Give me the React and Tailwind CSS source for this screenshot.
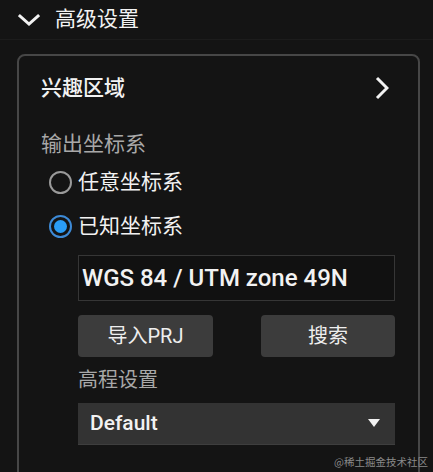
import React from "react";

const font = { fontFamily: "Roboto, 'Noto Sans CJK SC', sans-serif" };

export default function App() {
  return (
    <div className="relative w-[433px] h-[472px] overflow-hidden bg-[#141414] text-[#f2f2f2]" style={font}>
      {/* header */}
      <div className="flex items-center h-[40px] pl-[18px] border-b border-[#1c1c1c]">
        <svg width="22" height="14" viewBox="0 0 22 14" className="mt-[1px]">
          <path d="M2 3 L11 11 L20 3" fill="none" stroke="#f2f2f2" strokeWidth="3" strokeLinecap="square" />
        </svg>
        <span className="ml-[15px] text-[21px] leading-none">高级设置</span>
      </div>

      {/* card */}
      <div className="ml-[17px] mt-[14px] w-[403px] h-[440px] border-2 border-[#474747] rounded-[8px] pt-[12px] pl-[22px] pr-[23px]">
        <div className="flex items-center justify-between h-[40px]">
          <span className="text-[21px] leading-none font-medium">兴趣区域</span>
          <svg width="14" height="24" viewBox="0 0 14 24" className="mr-[6px]">
            <path d="M2 2 L12 12 L2 22" fill="none" stroke="#f2f2f2" strokeWidth="3" />
          </svg>
        </div>

        <div className="mt-[20px] h-[32px] flex items-center text-[21px] leading-none text-[#a8a8a8]">输出坐标系</div>

        <div className="flex items-center h-[44px] pl-[8px]">
          <span className="w-[23px] h-[23px] rounded-full border-2 border-[#9a9a9a]" />
          <span className="ml-[6px] text-[21px] leading-none">任意坐标系</span>
        </div>
        <div className="flex items-center h-[44px] pl-[8px]">
          <span className="w-[23px] h-[23px] rounded-full border-2 border-[#3d8ad6] flex items-center justify-center">
            <span className="w-[13px] h-[13px] rounded-full bg-[#2a9cf5]" />
          </span>
          <span className="ml-[6px] text-[21px] leading-none">已知坐标系</span>
        </div>

        <div className="ml-[37px] mt-[7px] h-[46px] border border-[#363636] bg-[#111111] flex items-center pl-[3px] text-[24px] font-medium">
          WGS 84 / UTM zone 49N
        </div>

        <div className="ml-[37px] mt-[14px] flex justify-between">
          <button className="w-[135px] h-[42px] rounded-[4px] bg-[#3c3c3c] text-[20px] text-[#eeeeee] flex items-center justify-center">导入PRJ</button>
          <button className="w-[134px] h-[42px] rounded-[4px] bg-[#3c3c3c] text-[20px] text-[#eeeeee] flex items-center justify-center">搜索</button>
        </div>

        <div className="ml-[37px] mt-[7px] h-[32px] flex items-center text-[20px] leading-none text-[#a8a8a8]">高程设置</div>

        <div className="ml-[37px] mt-[7px] h-[42px] bg-[#333333] border-b border-[#3e3e3e] flex items-center justify-between pl-[12px] pr-[15px]">
          <span className="text-[21px] font-medium">Default</span>
          <svg width="12" height="9" viewBox="0 0 12 9">
            <path d="M0 0 L12 0 L6 8 Z" fill="#f2f2f2" />
          </svg>
        </div>
      </div>

      <div className="absolute right-[5px] bottom-[2px] text-[10.5px] text-[#8a8a8a]" style={{ fontFamily: "'Noto Sans CJK SC', serif" }}>
        @稀土掘金技术社区
      </div>
    </div>
  );
}
